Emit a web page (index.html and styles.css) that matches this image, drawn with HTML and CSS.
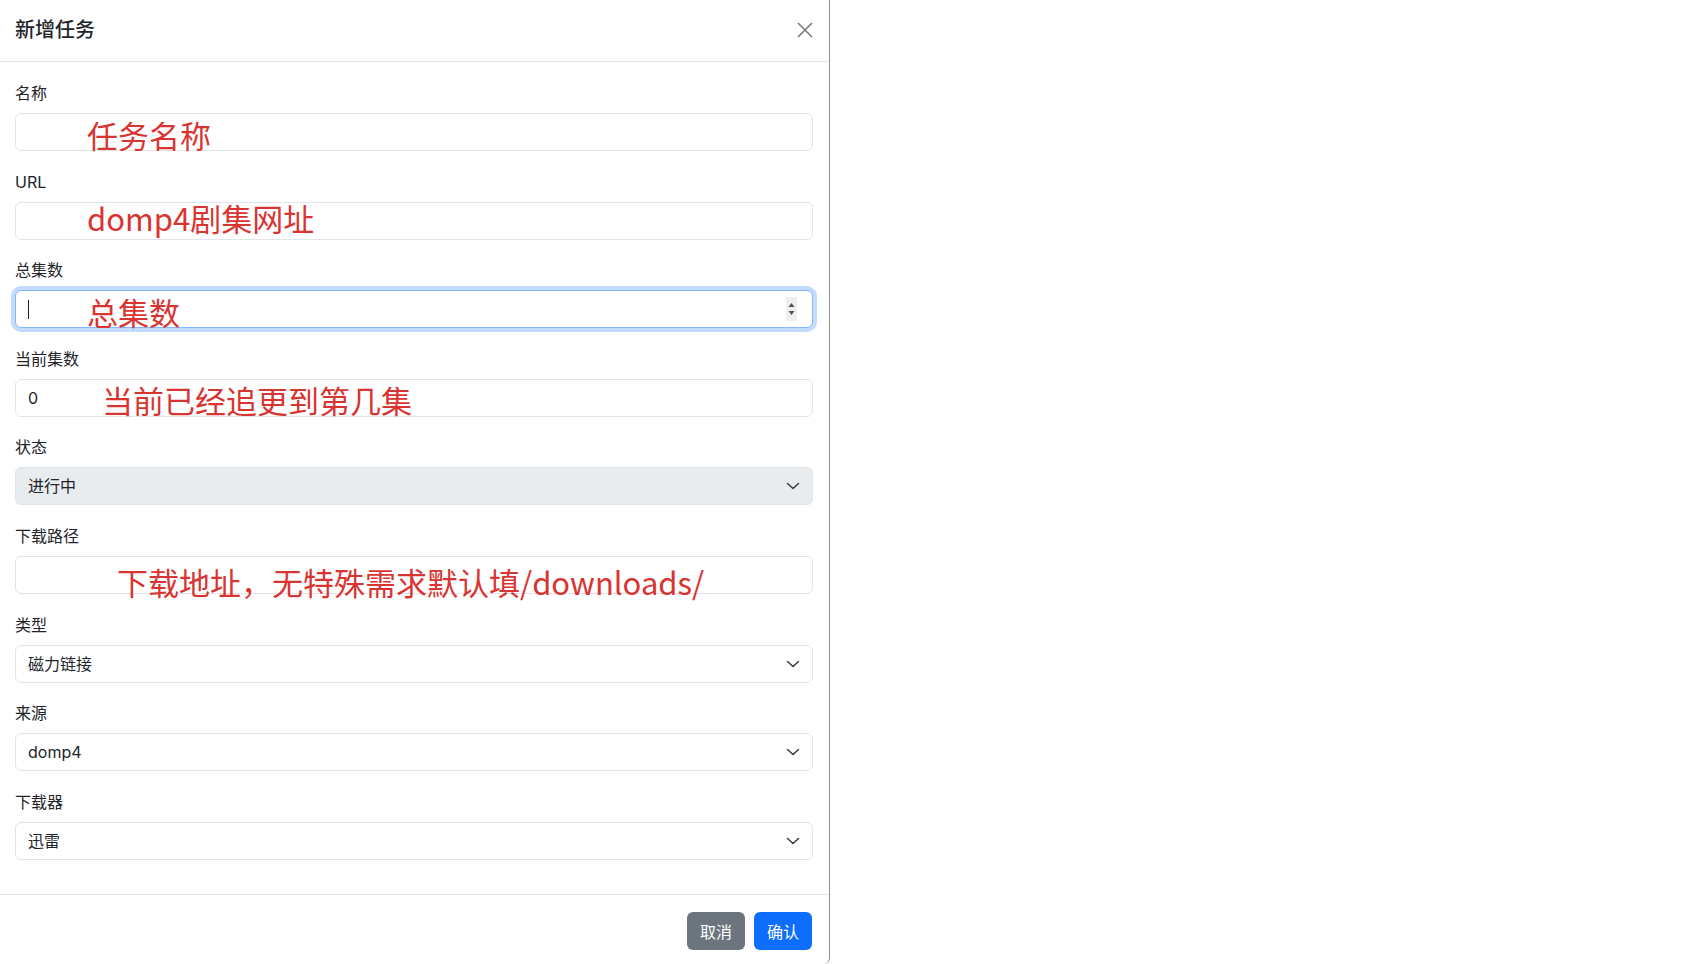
FILE: index.html
```html
<!DOCTYPE html>
<html lang="zh-CN">
  <head>
    <meta charset="UTF-8" />
    <meta name="viewport" content="width=device-width, initial-scale=1.0" />
    <title>新增任务</title>
    <link rel="stylesheet" href="styles.css">
  </head>
  <body>
    <div class="modal">
      <div class="modal-header">
        <h5 class="modal-title">新增任务</h5>
        <button class="btn-close" type="button" aria-label="Close">
          <svg width="16" height="16" viewBox="0 0 16 16">
            <path d="M1 1 15 15M15 1 1 15" />
          </svg>
        </button>
      </div>

      <div class="modal-body">
        <div class="field">
          <label>名称</label>
          <div class="form-control">
            <span class="note note-name">任务名称</span>
          </div>
        </div>

        <div class="field">
          <label>URL</label>
          <div class="form-control">
            <span class="note note-url">domp4剧集网址</span>
          </div>
        </div>

        <div class="field">
          <label>总集数</label>
          <div class="form-control focused">
            <span class="caret"></span>
            <span class="spinner">
              <svg width="11" height="24" viewBox="0 0 11 24">
                <path d="M5.5 6 8.5 10H2.5Z M5.5 18 8.5 14H2.5Z" />
              </svg>
            </span>
            <span class="note note-total">总集数</span>
          </div>
        </div>

        <div class="field">
          <label>当前集数</label>
          <div class="form-control">
            <span class="value">0</span>
            <span class="note note-current">当前已经追更到第几集</span>
          </div>
        </div>

        <div class="field">
          <label>状态</label>
          <div class="form-control form-select disabled">
            <span class="value">进行中</span>
            <svg class="chevron" width="14" height="8" viewBox="0 0 14 8"><polyline points="1.5,1.5 7,6.5 12.5,1.5" /></svg>
          </div>
        </div>

        <div class="field">
          <label>下载路径</label>
          <div class="form-control">
            <span class="note note-path">下载地址，无特殊需求默认填/downloads/</span>
          </div>
        </div>

        <div class="field">
          <label>类型</label>
          <div class="form-control form-select">
            <span class="value">磁力链接</span>
            <svg class="chevron" width="14" height="8" viewBox="0 0 14 8"><polyline points="1.5,1.5 7,6.5 12.5,1.5" /></svg>
          </div>
        </div>

        <div class="field">
          <label>来源</label>
          <div class="form-control form-select">
            <span class="value">domp4</span>
            <svg class="chevron" width="14" height="8" viewBox="0 0 14 8"><polyline points="1.5,1.5 7,6.5 12.5,1.5" /></svg>
          </div>
        </div>

        <div class="field">
          <label>下载器</label>
          <div class="form-control form-select">
            <span class="value">迅雷</span>
            <svg class="chevron" width="14" height="8" viewBox="0 0 14 8"><polyline points="1.5,1.5 7,6.5 12.5,1.5" /></svg>
          </div>
        </div>
      </div>

      <div class="modal-footer">
        <button class="btn btn-secondary" type="button">取消</button>
        <button class="btn btn-primary" type="button">确认</button>
      </div>
    </div>
  </body>
</html>
```

FILE: styles.css
```css
* {
  margin: 0;
  padding: 0;
  box-sizing: border-box;
}

body {
  background-color: #fff;
  color: #212529;
  font-family: Inter, 'Noto Sans CJK SC', sans-serif;
  font-size: 16px;
  line-height: 1.5;
  min-height: 100vh;
}

.modal {
  width: 830px;
  min-height: 964px;
  border-right: 1px solid #8e8e8e;
  border-bottom-right-radius: 6px;
  display: flex;
  flex-direction: column;
}

.modal-header {
  display: flex;
  align-items: center;
  justify-content: space-between;
  padding: 15px 16px 16px 15px;
  border-bottom: 1px solid #e3e5e8;
}

.modal-title {
  font-size: 20px;
  font-weight: 500;
  line-height: 30px;
}

.btn-close {
  background: none;
  border: none;
  width: 16px;
  height: 16px;
  display: flex;
  cursor: pointer;
}

.btn-close path {
  stroke: #7b7b7b;
  stroke-width: 1.6;
  fill: none;
}

.modal-body {
  padding: 19px 16px 13px 15px;
}

.field {
  margin-bottom: 18.6px;
}

.field label {
  display: block;
  line-height: 24px;
  margin-bottom: 8px;
}

.form-control {
  position: relative;
  display: flex;
  align-items: center;
  height: 38px;
  padding: 0 12px;
  border: 1px solid #e1e4e8;
  border-radius: 6px;
  background-color: #fff;
}

.form-control.focused {
  border-color: #86b7fe;
  box-shadow: 0 0 0 4px rgba(13, 110, 253, 0.25);
}

.form-control.disabled {
  background-color: #e9ecef;
}

.form-select {
  justify-content: space-between;
}

.value {
  line-height: 24px;
}

.chevron polyline {
  fill: none;
  stroke: #343a40;
  stroke-width: 1.5;
  stroke-linecap: round;
  stroke-linejoin: round;
}

.caret {
  width: 1px;
  height: 19px;
  background-color: #222;
}

.spinner {
  margin-left: auto;
  margin-right: 3px;
  display: flex;
  background-color: #efefef;
}

.spinner path {
  fill: #555;
}

/* red annotations drawn over the fields */
.note {
  position: absolute;
  color: #d83431;
  font-family: 'Noto Sans CJK SC', sans-serif;
  font-size: 31px;
  line-height: 31px;
  white-space: nowrap;
}

.note-name {
  left: 71px;
  top: 5px;
}

.note-url {
  left: 71px;
  top: -1px;
}

.note-total {
  left: 71px;
  top: 5px;
}

.note-current {
  left: 86px;
  top: 4px;
}

.note-path {
  left: 101px;
  top: 9px;
}

.modal-footer {
  margin-top: auto;
  display: flex;
  justify-content: flex-end;
  gap: 9px;
  padding: 17px 17px 14px;
  border-top: 1px solid #e3e5e8;
}

.btn {
  height: 38px;
  padding: 0 13px;
  border: none;
  border-radius: 6px;
  color: #fff;
  font-family: Inter, 'Noto Sans CJK SC', sans-serif;
  font-size: 16px;
  cursor: pointer;
}

.btn-secondary {
  background-color: #6c757d;
}

.btn-primary {
  background-color: #0d6efd;
}
```
